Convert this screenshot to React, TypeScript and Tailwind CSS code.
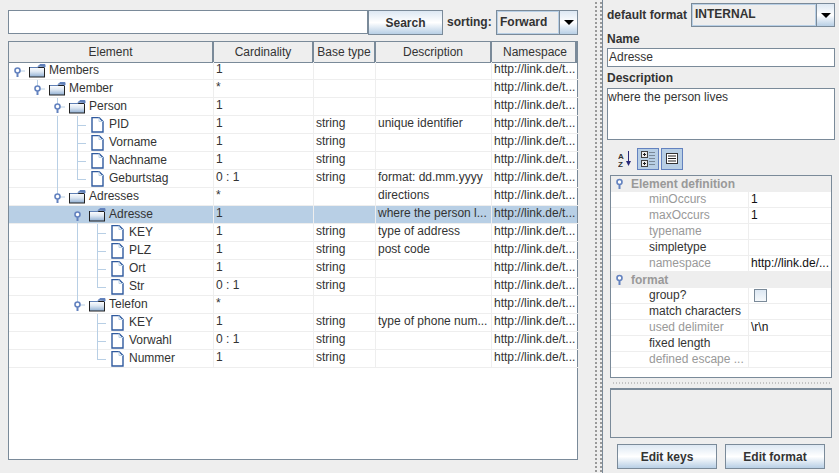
import {FC} from 'react'

type TreeRow = {
  name: string
  text: number
  folder?: boolean
  through?: number[]
  top?: number[]
  card: string
  base?: string
  desc?: string
  selected?: boolean
}

const rows: TreeRow[] = [
  {name: 'Members', text: 49, folder: true, card: '1'},
  {name: 'Member', text: 69, folder: true, top: [37], card: '*'},
  {name: 'Person', text: 89, folder: true, top: [57], through: [], card: '1'},
  {name: 'PID', text: 109, through: [57, 77], card: '1', base: 'string', desc: 'unique identifier'},
  {name: 'Vorname', text: 109, through: [57, 77], card: '1', base: 'string'},
  {name: 'Nachname', text: 109, through: [57, 77], card: '1', base: 'string'},
  {name: 'Geburtstag', text: 109, through: [57], top: [77], card: '0 : 1', base: 'string', desc: 'format: dd.mm.yyyy'},
  {name: 'Adresses', text: 89, folder: true, top: [57], card: '*', desc: 'directions'},
  {name: 'Adresse', text: 109, folder: true, through: [77], card: '1', desc: 'where the person l...', selected: true},
  {name: 'KEY', text: 129, through: [77, 97], card: '1', base: 'string', desc: 'type of address'},
  {name: 'PLZ', text: 129, through: [77, 97], card: '1', base: 'string', desc: 'post code'},
  {name: 'Ort', text: 129, through: [77, 97], card: '1', base: 'string'},
  {name: 'Str', text: 129, through: [77], top: [97], card: '0 : 1', base: 'string'},
  {name: 'Telefon', text: 109, folder: true, top: [77], card: '*'},
  {name: 'KEY', text: 129, through: [97], card: '1', base: 'string', desc: 'type of phone num...'},
  {name: 'Vorwahl', text: 129, through: [97], card: '0 : 1', base: 'string'},
  {name: 'Nummer', text: 129, top: [97], card: '1', base: 'string'},
]

const props1 = [
  {label: 'minOccurs', value: '1', off: true},
  {label: 'maxOccurs', value: '1', off: true},
  {label: 'typename', value: '', off: true},
  {label: 'simpletype', value: ''},
  {label: 'namespace', value: 'http://link.de/...', off: true},
]

const props2 = [
  {label: 'group?', value: '', check: true},
  {label: 'match characters', value: ''},
  {label: 'used delimiter', value: '\\r\\n', off: true},
  {label: 'fixed length', value: ''},
  {label: 'defined escape ...', value: '', off: true},
]

const Knob: FC<{x: number}> = ({x}) => (
  <g>
    <line x1={x + 3} y1={9} x2={x + 8} y2={9} stroke="#B8CFE5" />
    <line x1={x + 0.5} y1={9} x2={x + 0.5} y2={15} stroke="#6382BF" strokeWidth={2} />
    <circle cx={x + 0.5} cy={8.5} r={2.5} fill="#fff" stroke="#6382BF" strokeWidth={1.6} />
  </g>
)

const FolderIcon: FC = () => (
  <svg width="17" height="14" viewBox="0 0 17 14" className="shrink-0">
    <defs>
      <linearGradient id="fold" x1="0" y1="0" x2="0" y2="1">
        <stop offset="0" stopColor="#ffffff" />
        <stop offset="0.45" stopColor="#dce6f2" />
        <stop offset="1" stopColor="#8eaed2" />
      </linearGradient>
    </defs>
    <path d="M9 2.5 L11 0.5 H16 V3" fill="#6382BF" stroke="#6382BF" />
    <rect x="0.5" y="3.5" width="15" height="9.5" fill="url(#fold)" stroke="#222" />
    <path d="M1 3.5 H9 L11 1.5 H15.5 V4" fill="none" stroke="#5f7fb5" />
  </svg>
)

const FileIcon: FC = () => (
  <svg width="13" height="16" viewBox="0 0 13 16" className="shrink-0">
    <path d="M1 0.5 H8 L12 4.5 V15 H1 Z" fill="#fff" stroke="#2f5a9e" strokeWidth={1.4} />
    <path d="M8 0.5 V4.5 H12" fill="none" stroke="#b8cfe5" />
  </svg>
)

const TreeCell: FC<{row: TreeRow}> = ({row}) => {
  const knobX = row.text - 32
  return (
    <div className="relative h-full flex items-center" style={{paddingLeft: row.text - 9 - (row.folder ? 20 : 18)}}>
      <svg width="110" height="18" className="absolute left-[-9px] top-0 pointer-events-none">
        {(row.through || []).map((x) => (
          <line key={x} x1={x + 0.5} y1={0} x2={x + 0.5} y2={18} stroke="#B8CFE5" />
        ))}
        {(row.top || []).map((x) => (
          <line key={x} x1={x + 0.5} y1={0} x2={x + 0.5} y2={row.folder ? 8 : 10} stroke="#B8CFE5" />
        ))}
        {row.folder ? (
          <Knob x={knobX} />
        ) : (
          <line x1={row.text - 32} y1={9.5} x2={row.text - 23} y2={9.5} stroke="#B8CFE5" />
        )}
      </svg>
      <span className="relative">{row.folder ? <FolderIcon /> : <FileIcon />}</span>
      <span className={`absolute whitespace-nowrap`} style={{left: row.text - 9}}>
        {row.name}
      </span>
    </div>
  )
}

const Arrow: FC = () => (
  <div className="w-[18px] self-stretch flex items-center justify-center border-l border-[#7A8A99] bg-gradient-to-b from-[#DDE8F3] via-white to-[#B8CFE5]">
    <div className="w-0 h-0 border-x-[5px] border-x-transparent border-t-[5px] border-t-black" />
  </div>
)

const OceanButton: FC<{label: string; className: string}> = ({label, className}) => (
  <button
    className={`border border-[#7A8A99] bg-gradient-to-b from-[#DDE8F3] via-white to-[#B8CFE5] font-bold text-[#333] text-xs ${className}`}
  >
    {label}
  </button>
)

const PropRow: FC<{label: string; value: string; off?: boolean; check?: boolean}> = ({label, value, off, check}) => (
  <div className="h-4 flex border-b border-[#EEEEEE] text-xs leading-[15px]">
    <div className={`w-[138px] pl-[38px] border-r border-[#EEEEEE] whitespace-nowrap ${off ? 'text-[#999]' : 'text-[#333]'}`}>
      {label}
    </div>
    <div className="pl-[2px] flex-1 whitespace-nowrap overflow-hidden text-[#111]">
      {check ? (
        <div className="ml-[3px] mt-[1px] w-[13px] h-[13px] border border-[#7A8A99] bg-gradient-to-b from-[#DDE8F3] to-[#f5f8fb]" />
      ) : (
        value
      )}
    </div>
  </div>
)

const GroupHead: FC<{label: string}> = ({label}) => (
  <div className="h-4 flex items-center bg-[#EEEEEE] text-xs font-bold text-[#999]">
    <svg width="9" height="12" viewBox="0 0 9 12" className="ml-[4px] mr-[7px]">
      <line x1="4.5" y1="5" x2="4.5" y2="11" stroke="#6382BF" strokeWidth={2} />
      <circle cx="4.5" cy="4" r="2.5" fill="#fff" stroke="#6382BF" strokeWidth={1.6} />
    </svg>
    {label}
  </div>
)

const App: FC = () => {
  return (
    <div
      className="w-[839px] h-[473px] overflow-hidden flex bg-[#EEEEEE] text-xs text-[#333]"
      style={{fontFamily: '"Liberation Sans", Arial, sans-serif'}}
    >
      <div className="w-[594px] shrink-0 pl-2 pt-[10px]">
        <div className="flex h-[25px] w-[570px]">
          <input className="w-[360px] h-6 bg-white border border-[#7A8A99] border-b-[#7A8A99] outline-none" readOnly />
          <OceanButton label="Search" className="w-[75px] ml-[0px]" />
          <span className="ml-[4px] mr-[3px] font-bold leading-[25px] w-[46px] whitespace-nowrap">sorting:</span>
          <div className="flex flex-1 border border-[#7A8A99] bg-[#EEEEEE]">
            <div className="flex-1 font-bold leading-[20px] pl-[2px] border border-[#B8CFE5] ">Forward</div>
            <Arrow />
          </div>
        </div>

        <div className="mt-[6px] w-[570px] h-[419px] border border-[#7A8A99] bg-white">
          <div className="grid grid-cols-[205px_100px_62px_116px_86px] h-5 bg-[#EEEEEE] border-r-2 border-[#7A8A99] text-center leading-[20px]">
            {['Element', 'Cardinality', 'Base type', 'Description', 'Namespace'].map((h, i) => (
              <div key={h} className={i < 4 ? 'border-r-2 border-[#7A8A99] border-b border-b-[#7A8A99] whitespace-nowrap' : 'border-b border-[#7A8A99] whitespace-nowrap'}>
                {h}
              </div>
            ))}
          </div>
          {rows.map((r, i) => (
            <div
              key={i}
              className={`grid grid-cols-[205px_100px_62px_116px_86px] h-[18px] leading-[15px] ${r.selected ? 'bg-[#B8CFE5]' : ''}`}
            >
              <div className="border-r border-b border-[#EEEEEE]">
                <TreeCell row={r} />
              </div>
              <div className="border-r border-b border-[#EEEEEE] pl-[2px] whitespace-nowrap">{r.card}</div>
              <div className="border-r border-b border-[#EEEEEE] pl-[2px] whitespace-nowrap">{r.base}</div>
              <div className="border-r border-b border-[#EEEEEE] pl-[2px] whitespace-nowrap overflow-hidden">{r.desc}</div>
              <div className="border-b border-[#EEEEEE] pl-[2px] whitespace-nowrap overflow-hidden">http://link.de/t...</div>
            </div>
          ))}
        </div>
      </div>

      <div className="w-[8px] shrink-0 flex gap-[1px] pt-px">
        <div className="w-[2px] ml-px bg-[radial-gradient(#999_0.7px,transparent_0.8px)] bg-[length:2px_4px]" />
        <div className="w-[2px] ml-[2px] bg-[radial-gradient(#999_0.7px,transparent_0.8px)] bg-[length:2px_4px]" />
      </div>

      <div className="flex-1 border-l border-[#7A8A99] pl-[4px] pr-[4px] pt-[3px]">
        <div className="flex h-6 w-[228px]">
          <span className="font-bold w-[84px] leading-[24px] whitespace-nowrap">default format</span>
          <div className="flex flex-1 border border-[#7A8A99]">
            <div className="flex-1 font-bold leading-[18px] pl-[2px] border border-[#B8CFE5]">INTERNAL</div>
            <Arrow />
          </div>
        </div>
        <div className="font-bold h-[15px] mt-[5px] leading-[15px] w-[228px]">Name</div>
        <div className="mt-px h-[19px] w-[228px] bg-white border border-[#7A8A99] pl-[1px] leading-[17px]">Adresse</div>
        <div className="font-bold h-[15px] mt-[4px] leading-[15px]">Description</div>
        <div className="mt-[2px] h-[52px] w-[228px] bg-white border border-[#7A8A99] leading-[17px]">where the person lives</div>

        <div className="flex h-[22px] mt-2 ml-[8px] items-center gap-[2px]">
          <div className="w-[20px] h-[22px] flex items-center justify-center">
            <svg width="14" height="16" viewBox="0 0 14 16">
              <text x="0" y="7.5" fontSize="8" fontWeight="bold" fill="#333">A</text>
              <text x="0" y="15.5" fontSize="8" fontWeight="bold" fill="#333">Z</text>
              <line x1="10.5" y1="0" x2="10.5" y2="13" stroke="#2a2a7a" />
              <path d="M8 10 H13 L10.5 15 Z" fill="#2a2a7a" />
            </svg>
          </div>
          <div className="w-[22px] h-[22px] border border-[#6382BF] bg-[#B8CFE5] flex items-center justify-center">
            <svg width="14" height="16" viewBox="0 0 14 16" fill="none">
              <rect x="0.5" y="0.5" width="6" height="6" fill="#eee" stroke="#444" />
              <rect x="0.5" y="9.5" width="6" height="6" fill="#eee" stroke="#444" />
              <path d="M2 3.5H5M3.5 2V5M2 12.5H5M3.5 11V14" stroke="#222" />
              <path d="M8 1.5H14M8 4.5H14M8 7.5H14M8 10.5H14M8 13.5H14" stroke="#7A8A99" />
            </svg>
          </div>
          <div className="w-[22px] h-[22px] border border-[#6382BF] bg-[#B8CFE5] flex items-center justify-center">
            <svg width="12" height="12" viewBox="0 0 12 12" fill="#fff">
              <rect x="0.5" y="0.5" width="11" height="10" stroke="#333" />
              <path d="M2 3H10M2 5.5H10M2 8H10" stroke="#222" />
            </svg>
          </div>
        </div>

        <div className="mt-[5px] ml-[3px] w-[222px] h-[203px] border border-[#7A8A99] bg-white pt-[0px]">
          <GroupHead label="Element definition" />
          {props1.map((p) => (
            <PropRow key={p.label} {...p} />
          ))}
          <GroupHead label="format" />
          {props2.map((p) => (
            <PropRow key={p.label} {...p} />
          ))}
        </div>

        <div className="h-[10px] ml-[3px] w-[222px] flex items-center px-[2px]">
          <div className="w-full h-[2px] bg-[radial-gradient(#999_0.7px,transparent_0.8px)] bg-[length:3px_2px]" />
        </div>

        <div className="ml-[3px] w-[222px] h-[50px] border border-[#7A8A99] border-t-2" />

        <div className="flex mt-[6px] ml-[10px] gap-[8px]">
          <OceanButton label="Edit keys" className="w-[100px] h-[25px]" />
          <OceanButton label="Edit format" className="w-[100px] h-[25px]" />
        </div>
      </div>
    </div>
  )
}

export default App
